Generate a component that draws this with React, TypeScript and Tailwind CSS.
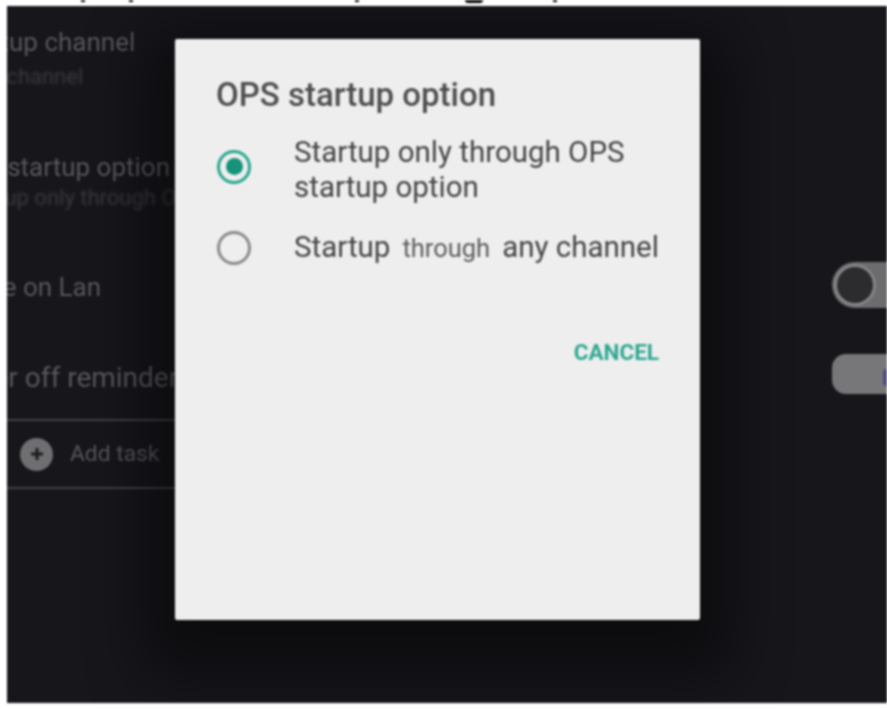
const rowText = "shrink-0 whitespace-nowrap text-[26px] leading-[26px] text-[#56565b]";
const subText = "shrink-0 whitespace-nowrap text-[22px] leading-[20px] text-[#3b3b40] blur-[0.8px]";

function Radio({ checked }: { checked?: boolean }) {
  return (
    <span
      className={
        checked
          ? "ml-[1px] -mt-[7px] flex h-[34px] w-[34px] shrink-0 items-center justify-center rounded-full border-[3px] border-[#2aa78f]"
          : "ml-[1px] -mt-[1px] flex h-[34px] w-[34px] shrink-0 items-center justify-center rounded-full border-[3px] border-[#8a8a8a]"
      }
    >
      {checked && <span className="h-[17px] w-[17px] rounded-full bg-[#169379]" />}
    </span>
  );
}

function Dialog() {
  return (
    <div className="absolute left-[168px] top-[33px] flex h-[581px] w-[525px] flex-col rounded-[2px] bg-[#eeeeee] pl-[41px] pr-[41px] pt-[36px] text-[#454545] shadow-[0_24px_60px_30px_rgba(0,0,0,0.45)]">
      <h2 className="whitespace-nowrap text-[33px] font-medium leading-[40px] text-[#4e4e4e]">OPS startup option</h2>
      <div className="mt-[20px] flex items-center">
        <Radio checked />
        <p className="ml-[43px] whitespace-nowrap text-[29.5px] leading-[35px]">
          Startup only through OPS
          <br />
          startup option
        </p>
      </div>
      <div className="mt-[25px] flex items-center">
        <Radio />
        <p className="ml-[43px] flex items-baseline whitespace-nowrap text-[29.5px] leading-[35px]">
          <span>Startup</span>
          <span className="mx-[12px] text-[25.5px] text-[#5c5c5c]">through</span>
          <span>any channel</span>
        </p>
      </div>
      <div className="mt-[74px] flex justify-end">
        <button className="text-[22.5px] font-bold leading-[24px] text-[#2fa893]">CANCEL</button>
      </div>
    </div>
  );
}

export default function App() {
  return (
    <div className="relative h-[709px] w-[887px] overflow-hidden bg-white pb-[6px] pl-[7px] pt-[6px] font-['Roboto',sans-serif] blur-[0.8px]">
      {/* bits of the caption that got cropped off above the photo */}
      {[81, 129, 355, 553].map((x) => (
        <span key={x} className="absolute top-0 h-[2px] w-[4px] bg-black" style={{ left: x }} />
      ))}
      <span className="absolute left-[465px] top-0 h-[3px] w-[18px] rounded-b-full bg-black" />

      <div className="relative flex h-full flex-col overflow-hidden bg-[#16161b]">
        <div className="flex h-[81px] flex-col pt-[23px]">
          <span className={`${rowText} -ml-[54px]`}>Startup channel</span>
          <span className={`${subText} mt-[12px] -ml-[43px]`}>Any channel</span>
        </div>
        <div className="flex h-[121px] flex-col pt-[67px]">
          <span className={`${rowText} -ml-[56px]`}>OPS startup option</span>
          <span className={`${subText} mt-[8px] -ml-[50px]`}>Startup only through OPS startup option</span>
        </div>
        <div className="mt-[32px] flex h-[94px] items-center justify-between">
          <span className={`${rowText} -ml-[54px]`}>Wake on Lan</span>
          <span className="-mr-[40px] -mt-[4px] flex h-[46px] w-[95px] shrink-0 items-center rounded-full bg-[#6c6c6e] pl-[5px]">
            <span className="h-[36px] w-[36px] rounded-full bg-[#2c2c2f] ring-[3px] ring-[#858587]" />
          </span>
        </div>
        <div className="flex h-[85px] items-center justify-between">
          <span className="mt-[3px] -ml-[68px] shrink-0 whitespace-nowrap text-[28px] leading-[26px] text-[#56565b]">Power off reminder</span>
          <span className="-mr-[40px] -mt-[6px] flex h-[40px] w-[95px] shrink-0 items-center rounded-[14px] bg-[#77777a] pl-[51px]">
            <span className="mt-[8px] h-[17px] w-[6px] rounded-sm bg-[#4f4b80]" />
          </span>
        </div>
        <div className="flex h-[70px] w-[168px] items-center border-y-2 border-[#414146] pl-[13px]">
          <span className="flex h-[33px] w-[33px] shrink-0 items-center justify-center rounded-full bg-[#6f6f72]">
            <svg width="18" height="18" viewBox="0 0 18 18" fill="none" stroke="#1c1c20" strokeWidth="3">
              <path d="M9 3v12M3 9h12" />
            </svg>
          </span>
          <span className="ml-[17px] whitespace-nowrap text-[22.8px] text-[#56565b]">Add task</span>
        </div>
        <Dialog />
      </div>
    </div>
  );
}
